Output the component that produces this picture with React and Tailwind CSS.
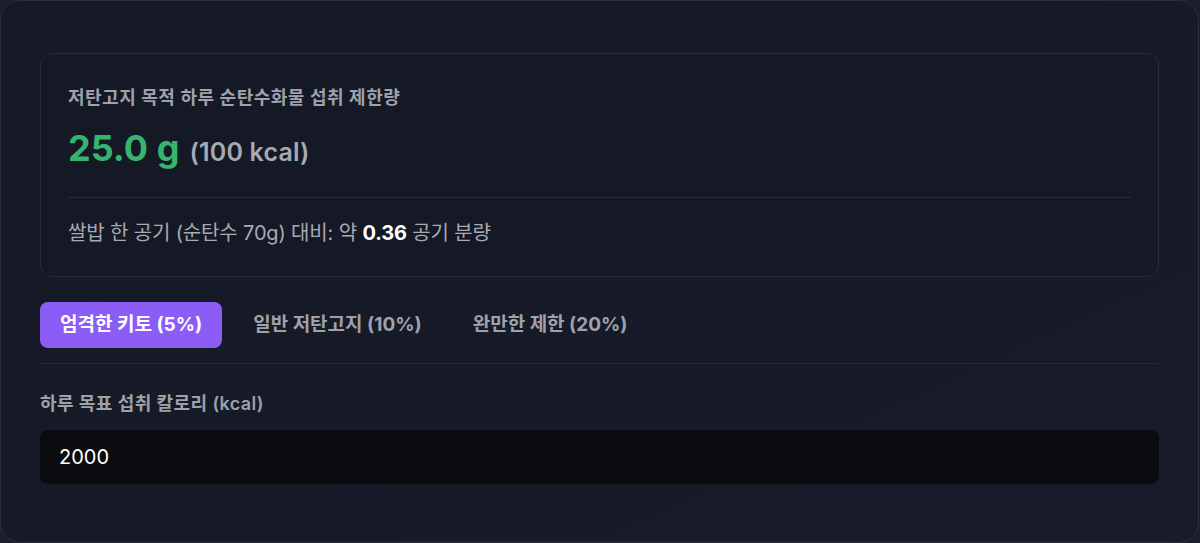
import React, { useState } from "react";

const font = {
  fontFamily: 'Inter, "Noto Sans CJK KR", "Noto Sans", sans-serif',
};

const tabs = [
  { label: "엄격한 키토 (5%)", ratio: 0.05 },
  { label: "일반 저탄고지 (10%)", ratio: 0.1 },
  { label: "완만한 제한 (20%)", ratio: 0.2 },
];

export default function App() {
  const [active, setActive] = useState(0);
  const [kcal, setKcal] = useState("2000");

  const cal = (Number(kcal) || 0) * tabs[active].ratio;
  const grams = cal / 4;
  const bowls = grams / 70;

  return (
    <div className="w-[1200px] h-[543px] bg-[#1a1f2d] overflow-hidden" style={font}>
      <div className="w-[1199px] h-[543px] rounded-[20px] border border-[#2a2f3c] bg-gradient-to-br from-[#151925] to-[#181c2a] px-[39px] pt-[52px]">
        {/* result card */}
        <div className="rounded-[12px] border border-[#262b38] bg-[#151925] px-[27px] pt-[31px] pb-[29px]">
          <div className="text-[18px] leading-[26px] font-semibold text-[#9ea2ac] tracking-[0.5px]">
            저탄고지 목적 하루 순탄수화물 섭취 제한량
          </div>
          <div className="mt-[17px] flex items-baseline gap-[10px] h-[40px]">
            <span className="text-[36px] leading-[40px] font-bold text-[#36b46f]">
              {grams.toFixed(1)} g
            </span>
            <span className="text-[25px] leading-[32px] font-semibold text-[#a6aab3] tracking-[0.2px]">
              ({Math.round(cal)} kcal)
            </span>
          </div>
          <div className="mt-[29px] border-t border-[#262b38]" />
          <div className="mt-[21px] text-[20px] leading-[28px] text-[#a7aab3] tracking-[-0.15px]">
            쌀밥 한 공기 (순탄수 70g) 대비: 약{" "}
            <span className="font-bold text-white">{bowls.toFixed(2)}</span> 공기 분량
          </div>
        </div>

        {/* ratio tabs */}
        <div className="mt-[25px] flex gap-[11px] pb-[15px] border-b border-[#232836]">
          {tabs.map((t, i) => (
            <button
              key={t.label}
              onClick={() => setActive(i)}
              className={
                i === active
                  ? "h-[46px] rounded-[8px] bg-[#8b5cf6] px-[20px] text-[19px] font-bold text-white"
                  : "h-[46px] rounded-[8px] px-[20px] text-[19px] font-bold text-[#9ea2ac]"
              }
            >
              {t.label}
            </button>
          ))}
        </div>

        {/* calorie input */}
        <label className="block mt-[27px] text-[18px] leading-[26px] font-semibold text-[#9ea2ac] tracking-[0.4px]">
          하루 목표 섭취 칼로리 (kcal)
        </label>
        <input
          value={kcal}
          onChange={(e) => setKcal(e.target.value)}
          className="mt-[13px] w-full h-[54px] rounded-[8px] bg-[#0b0c10] px-[19px] text-[20px] text-white outline-none"
        />
      </div>
    </div>
  );
}
